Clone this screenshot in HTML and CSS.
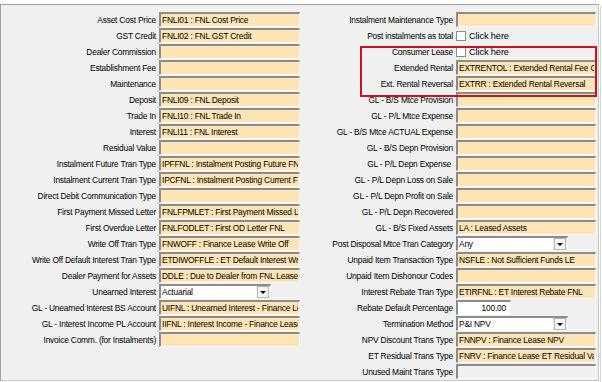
FILE: index.html
```html
<!DOCTYPE html>
<html>
<head>
    <title>Finance Lease - Product Settings</title>
    <link rel="stylesheet" href="styles.css">
</head>
<body>
    <div class="frame">
        <div class="panel">
            <div class="col col-left">
                <div class="row"><label>Asset Cost Price</label><input class="field" type="text" value="FNLI01 : FNL Cost Price" readonly></div>
                <div class="row"><label>GST Credit</label><input class="field" type="text" value="FNLI02 : FNL GST Credit" readonly></div>
                <div class="row"><label>Dealer Commission</label><input class="field" type="text" value="" readonly></div>
                <div class="row"><label>Establishment Fee</label><input class="field" type="text" value="" readonly></div>
                <div class="row"><label>Maintenance</label><input class="field" type="text" value="" readonly></div>
                <div class="row"><label>Deposit</label><input class="field" type="text" value="FNLI09 : FNL Deposit" readonly></div>
                <div class="row"><label>Trade In</label><input class="field" type="text" value="FNLI10 : FNL Trade In" readonly></div>
                <div class="row"><label>Interest</label><input class="field" type="text" value="FNLI11 : FNL Interest" readonly></div>
                <div class="row"><label>Residual Value</label><input class="field" type="text" value="" readonly></div>
                <div class="row"><label>Instalment Future Tran Type</label><input class="field" type="text" value="IPFFNL : Instalment Posting Future FNL" readonly></div>
                <div class="row"><label>Instalment Current Tran Type</label><input class="field" type="text" value="IPCFNL : Instalment Posting Current FNL" readonly></div>
                <div class="row"><label>Direct Debit Communication Type</label><input class="field" type="text" value="" readonly></div>
                <div class="row"><label>First Payment Missed Letter</label><input class="field" type="text" value="FNLFPMLET : First Payment Missed Letter" readonly></div>
                <div class="row"><label>First Overdue Letter</label><input class="field" type="text" value="FNLFODLET : First OD Letter FNL" readonly></div>
                <div class="row"><label>Write Off Tran Type</label><input class="field" type="text" value="FNWOFF : Finance Lease Write Off" readonly></div>
                <div class="row"><label>Write Off Default Interest Tran Type</label><input class="field" type="text" value="ETDIWOFFLE : ET Default Interest Write Off" readonly></div>
                <div class="row"><label>Dealer Payment for Assets</label><input class="field" type="text" value="DDLE : Due to Dealer from FNL Lease" readonly></div>
                <div class="row"><label>Unearned Interest</label>
                    <div class="combo combo-left"><span class="combo-text">Actuarial</span><span class="combo-btn"><span class="tri"></span></span></div>
                </div>
                <div class="row"><label>GL - Unearned Interest BS Account</label><input class="field" type="text" value="UIFNL : Unearned Interest - Finance Lease" readonly></div>
                <div class="row"><label>GL - Interest Income PL Account</label><input class="field" type="text" value="IIFNL : Interest Income - Finance Lease" readonly></div>
                <div class="row"><label>Invoice Comm. (for Instalments)</label><input class="field" type="text" value="" readonly></div>
            </div>

            <div class="col col-right">
                <div class="row"><label>Instalment Maintenance Type</label><input class="field" type="text" value="" readonly></div>
                <div class="row"><label>Post instalments as total</label><span class="check"></span><span class="check-text">Click here</span></div>
                <div class="row"><label>Consumer Lease</label><span class="check"></span><span class="check-text">Click here</span></div>
                <div class="row"><label>Extended Rental</label><input class="field" type="text" value="EXTRENTOL : Extended Rental Fee Charge" readonly></div>
                <div class="row"><label>Ext. Rental Reversal</label><input class="field" type="text" value="EXTRR : Extended Rental Reversal" readonly></div>
                <div class="row"><label>GL - B/S Mtce Provision</label><input class="field" type="text" value="" readonly></div>
                <div class="row"><label>GL - P/L Mtce Expense</label><input class="field" type="text" value="" readonly></div>
                <div class="row"><label>GL - B/S Mtce ACTUAL Expense</label><input class="field" type="text" value="" readonly></div>
                <div class="row"><label>GL - B/S Depn Provision</label><input class="field" type="text" value="" readonly></div>
                <div class="row"><label>GL - P/L Depn Expense&nbsp;</label><input class="field" type="text" value="" readonly></div>
                <div class="row"><label>GL - P/L Depn Loss on Sale</label><input class="field" type="text" value="" readonly></div>
                <div class="row"><label>GL - P/L Depn Profit on Sale</label><input class="field" type="text" value="" readonly></div>
                <div class="row"><label>GL - P/L Depn Recovered</label><input class="field" type="text" value="" readonly></div>
                <div class="row"><label>GL - B/S Fixed Assets</label><input class="field" type="text" value="LA : Leased Assets" readonly></div>
                <div class="row"><label>Post Disposal Mtce Tran Category</label>
                    <div class="combo combo-right"><span class="combo-text">Any</span><span class="combo-btn"><span class="tri"></span></span></div>
                </div>
                <div class="row"><label>Unpaid Item Transaction Type</label><input class="field" type="text" value="NSFLE : Not Sufficient Funds LE" readonly></div>
                <div class="row"><label>Unpaid Item Dishonour Codes</label><input class="field" type="text" value="" readonly></div>
                <div class="row"><label>Interest Rebate Tran Type</label><input class="field" type="text" value="ETIRFNL : ET Interest Rebate FNL" readonly></div>
                <div class="row"><label>Rebate Default Percentage</label><input class="field number" type="text" value="100.00"></div>
                <div class="row"><label>Termination Method</label>
                    <div class="combo combo-right"><span class="combo-text">P&amp;I NPV</span><span class="combo-btn"><span class="tri"></span></span></div>
                </div>
                <div class="row"><label>NPV Discount Trans Type</label><input class="field" type="text" value="FNNPV : Finance Lease NPV" readonly></div>
                <div class="row"><label>ET Residual Trans Type</label><input class="field" type="text" value="FNRV : Finance Lease ET Residual Value" readonly></div>
                <div class="row"><label>Unused Maint Trans Type</label><input class="field disabled" type="text" value="" disabled></div>
            </div>
        </div>

        <!-- highlight drawn over the screenshot -->
        <div class="highlight"></div>
    </div>
</body>
</html>
```

FILE: styles.css
```css
body {
    margin: 0;
    background: #fff;
    font-family: "Liberation Sans", Arial, sans-serif;
    font-size: 8.4px;
    letter-spacing: -0.2px;
    color: #000;
}
.frame {
    position: relative;
    width: 602px;
    height: 382px;
    padding-top: 4px;
    box-sizing: border-box;
}
.panel {
    display: flex;
    width: 599px;
    height: 377px;
    box-sizing: border-box;
    padding-top: 7px;
    background: #f0f0f0;
    border: 1px solid #a0a0a0;
    border-right-color: #c8c8c8;
    border-bottom-color: #c8c8c8;
    box-shadow: 1px 1px 0 #fff, 2px 2px 0 #d6d6d6;
}
.col {
    display: flex;
    flex-direction: column;
    gap: 1px;
}
.col-left {
    width: 299px;
}
.col-right {
    width: 297px;
}
.row {
    display: flex;
    align-items: center;
    height: 15px;
}
.row label {
    flex: none;
    text-align: right;
    white-space: nowrap;
    margin-right: 3px;
}
.col-left label {
    width: 155px;
}
.col-right label {
    width: 153px;
}
.field {
    box-sizing: border-box;
    height: 15px;
    margin: 0;
    padding: 0 1px;
    font: inherit;
    letter-spacing: -0.2px;
    color: #000;
    background: #ffe4b5;
    border-style: solid;
    border-width: 2px 1px 1px 2px;
    border-color: #8c8c8c #f4f4f4 #fff #8c8c8c;
    outline: none;
}
.col-left .field {
    width: 141px;
}
.col-right .field {
    width: 140px;
}
.col-right .field.number {
    width: 55px;
    background: #fff;
    text-align: right;
    padding-right: 4px;
}
.field.disabled {
    background: #f0f0f0;
}
.combo {
    box-sizing: border-box;
    display: flex;
    align-items: center;
    height: 15px;
    background: #fff;
    border-style: solid;
    border-width: 2px 1px 1px 2px;
    border-color: #8c8c8c #f4f4f4 #fff #8c8c8c;
}
.combo-left {
    width: 112px;
}
.combo-right {
    width: 112px;
}
.combo-text {
    flex: 1;
    padding-left: 1px;
}
.combo-btn {
    box-sizing: border-box;
    display: flex;
    align-items: center;
    justify-content: center;
    width: 12px;
    height: 12px;
    margin-right: 1px;
    background: #f4f4f4;
    border: 1px solid #b4b4b4;
}
.tri {
    width: 0;
    height: 0;
    border-left: 3px solid transparent;
    border-right: 3px solid transparent;
    border-top: 3px solid #000;
    margin-top: 1px;
}
.check {
    box-sizing: border-box;
    width: 10px;
    height: 10px;
    background: #fff;
    border: 1px solid #8c8c8c;
}
.check-text {
    margin-left: 3px;
    font-size: 9.2px;
    letter-spacing: -0.1px;
}
.highlight {
    position: absolute;
    left: 360px;
    top: 46px;
    width: 237px;
    height: 51px;
    box-sizing: border-box;
    border: 2px solid #c8141e;
}
```
